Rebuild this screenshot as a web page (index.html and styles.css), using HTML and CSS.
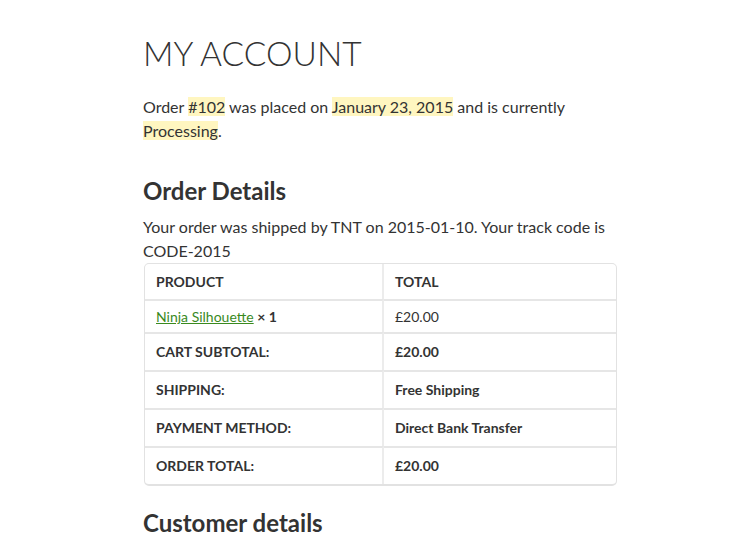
FILE: index.html
```html
<!DOCTYPE html>
<html>
<head>
<meta charset="utf-8">
<link rel="stylesheet" href="styles.css">
</head>
<body>
<main class="content">
  <h1 class="page-title">My Account</h1>
  <p class="order-info">Order <mark>#102</mark> was placed on <mark>January 23, 2015</mark> and is currently <mark>Processing</mark>.</p>
  <h2 class="section-title">Order Details</h2>
  <p class="ship-info">Your order was shipped by TNT on 2015-01-10. Your track code is CODE-2015</p>
  <table class="shop-table">
    <thead>
      <tr><th>Product</th><th>Total</th></tr>
    </thead>
    <tbody>
      <tr><td><a href="#">Ninja Silhouette</a> <strong>× 1</strong></td><td>£20.00</td></tr>
    </tbody>
    <tfoot>
      <tr><th>Cart Subtotal:</th><td>£20.00</td></tr>
      <tr><th>Shipping:</th><td>Free Shipping</td></tr>
      <tr><th>Payment Method:</th><td>Direct Bank Transfer</td></tr>
      <tr><th>Order Total:</th><td>£20.00</td></tr>
    </tfoot>
  </table>
  <h2 class="section-title customer">Customer details</h2>
</main>
</body>
</html>
```
FILE: styles.css
```css
html, body {
  margin: 0;
  padding: 0;
  background: #fff;
}
body {
  font-family: Lato, "Open Sans", sans-serif;
  color: #333;
  font-size: 16px;
  line-height: 24px;
}
.content {
  width: 472px;
  margin: 0 0 0 144px;
  padding-top: 33px;
}
.page-title {
  font-weight: 300;
  font-size: 33.5px;
  line-height: 40px;
  text-transform: uppercase;
  margin: 0 0 22px -1px;
  color: #333;
}
.order-info {
  margin: 0 0 0 -1px;
}
mark {
  background: #fff6c0;
  color: #333;
}
.section-title {
  font-size: 24px;
  line-height: 32px;
  font-weight: 700;
  margin: 32px 0 8px -1px;
}
.ship-info {
  margin: 0 0 0 -1px;
}
.shop-table {
  width: 473px;
  border-collapse: separate;
  border-spacing: 0;
  border: 1px solid #e2e2e2;
  border-bottom-width: 2px;
  border-radius: 5px;
  font-size: 14px;
  line-height: 21px;
  margin-top: 0;
}
.shop-table th, .shop-table td {
  text-align: left;
  padding: 7px 12px 6px 11px;
  border-top: 2px solid #e6e6e6;
  font-weight: 700;
  vertical-align: middle;
}
.shop-table th:first-child, .shop-table td:first-child {
  width: 214px;
  border-right: 2px solid #ececec;
}
.shop-table thead th {
  border-top: 0;
  padding-top: 7px;
  padding-bottom: 7px;
  text-transform: uppercase;
}
.shop-table tbody td {
  font-weight: 400;
  padding-top: 5px;
  padding-bottom: 5px;
}
.shop-table tfoot th, .shop-table tfoot td {
  padding-top: 7px;
  padding-bottom: 8px;
}
.shop-table tfoot th {
  text-transform: uppercase;
}
.shop-table a {
  color: #3a8a1e;
  text-decoration: underline;
}
.shop-table strong {
  font-weight: 700;
}
.customer {
  margin-top: 21px;
}
```
